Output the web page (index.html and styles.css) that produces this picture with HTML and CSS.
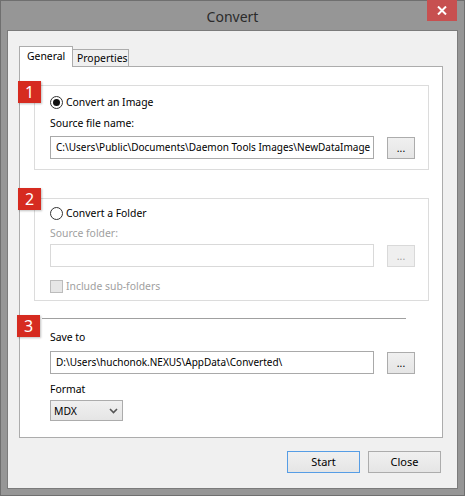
FILE: index.html
```html
<!DOCTYPE html>
<html>
<head>
<meta charset="utf-8">
<link rel="stylesheet" href="styles.css">
</head>
<body>
<div class="window">
  <div class="titlebar">
    <span class="title">Convert</span>
    <div class="close-btn"><svg width="10" height="9" viewBox="0 0 10 9"><path d="M1 0.5 L9 8.5 M9 0.5 L1 8.5" stroke="#fff" stroke-width="2"/></svg></div>
  </div>
  <div class="client">
    <div class="tabs">
      <div class="tab active">General</div>
      <div class="tab">Properties</div>
    </div>
    <div class="panel">
      <div class="group g1">
        <div class="badge">1</div>
        <div class="row"><span class="radio checked"></span><span>Convert an Image</span></div>
        <div class="row label">Source file name:</div>
        <div class="field-row">
          <div class="input">C:\Users\Public\Documents\Daemon Tools Images\NewDataImage</div>
          <div class="browse">...</div>
        </div>
      </div>
      <div class="group g2">
        <div class="badge">2</div>
        <div class="row"><span class="radio"></span><span>Convert a Folder</span></div>
        <div class="row label disabled">Source folder:</div>
        <div class="field-row">
          <div class="input disabled"></div>
          <div class="browse disabled">...</div>
        </div>
        <div class="row check-row disabled"><span class="checkbox"></span><span>Include sub-folders</span></div>
      </div>
      <div class="section3">
        <div class="badge">3</div>
        <div class="sep"></div>
        <div class="row label save-label">Save to</div>
        <div class="field-row save-row">
          <div class="input">D:\Users\huchonok.NEXUS\AppData\Converted\</div>
          <div class="browse">...</div>
        </div>
        <div class="row label format-label">Format</div>
        <div class="select"><span>MDX</span><svg width="9" height="6" viewBox="0 0 9 6"><path d="M1 1 L4.5 4.5 L8 1" fill="none" stroke="#555" stroke-width="1.6"/></svg></div>
      </div>
    </div>
    <div class="actions">
      <div class="btn primary">Start</div>
      <div class="btn">Close</div>
    </div>
  </div>
</div>
</body>
</html>
```
FILE: styles.css
```css
html, body {
  margin: 0;
  padding: 0;
}
body {
  font-family: "Noto Sans", "Open Sans", sans-serif;
  font-size: 10.4px;
  color: #000;
  background: #969696;
}
.window {
  width: 465px;
  height: 496px;
  box-sizing: border-box;
  background: #969696;
  border: 1px solid #6f6f6f;
  position: relative;
  display: flex;
  flex-direction: column;
  padding: 0 6px 6px 6px;
}
.titlebar {
  height: 29px;
  flex: none;
  display: flex;
  align-items: center;
  justify-content: center;
}
.title {
  font-size: 14px;
  color: #2b2b2b;
  margin-top: 1px;
}
.close-btn {
  position: absolute;
  top: -1px;
  right: 7px;
  width: 30px;
  height: 21px;
  background: #c75050;
  display: flex;
  align-items: center;
  justify-content: center;
}
.client {
  flex: 1;
  background: #f0f0f0;
  border: 1px solid #7b7b7b;
  display: flex;
  flex-direction: column;
  padding: 15px 14px 0 11px;
}
.tabs {
  display: flex;
  align-items: flex-end;
  flex: none;
}
.tab {
  box-sizing: border-box;
  height: 17px;
  border: 1px solid #acacac;
  border-bottom: none;
  background: #f0f0f0;
  padding: 0 4px;
  line-height: 16px;
  width: 57px;
  margin-left: -1px;
}
.tab.active {
  position: relative;
  z-index: 1;
  height: 21px;
  margin-bottom: -1px;
  margin-left: 0;
  width: 54px;
  background: #fff;
  padding: 0 7px;
  line-height: 19px;
}
.panel {
  box-sizing: border-box;
  width: 424px;
  height: 372px;
  flex: none;
  background: #fff;
  border: 1px solid #acacac;
  padding: 18px 13px 0 14px;
}
.group {
  position: relative;
  border: 1px solid #dcdcdc;
  padding: 8px 13px 10px 15px;
}
.g2 {
  margin-top: 28px;
  padding: 6px 13px 6px 15px;
}
.badge {
  position: absolute;
  left: -17px;
  top: -5px;
  width: 23px;
  height: 22px;
  background: #d62b20;
  color: #fff;
  font-size: 16px;
  line-height: 22px;
  text-align: center;
  box-shadow: 1px 1px 2px rgba(0, 0, 0, 0.25);
}
.g2 .badge {
  top: -11px;
}
.row {
  height: 16px;
  line-height: 16px;
  display: flex;
  align-items: center;
  white-space: nowrap;
}
.label {
  margin-top: 5px;
}
.g2 .label {
  margin-top: 4px;
}
.disabled {
  color: #a0a0a0;
}
.radio {
  box-sizing: border-box;
  width: 13px;
  height: 13px;
  border: 1px solid #333;
  border-radius: 50%;
  background: #fff;
  margin-right: 3px;
  display: flex;
  align-items: center;
  justify-content: center;
}
.radio.checked::after {
  content: "";
  width: 7px;
  height: 7px;
  border-radius: 50%;
  background: #111;
}
.checkbox {
  box-sizing: border-box;
  width: 13px;
  height: 13px;
  border: 1px solid #bcbcbc;
  background: #e6e6e6;
  margin-right: 3px;
}
.field-row {
  display: flex;
  align-items: flex-start;
  margin-top: 5px;
}
.g2 .field-row {
  margin-top: 3px;
}
.check-row {
  margin-top: 11px;
}
.input {
  box-sizing: border-box;
  width: 324px;
  height: 23px;
  border: 1px solid #a9a9a9;
  background: #fff;
  padding: 0 0 0 5px;
  line-height: 21px;
  font-size: 10px;
  white-space: nowrap;
  overflow: hidden;
}
.input.disabled {
  border-color: #d9d9d9;
}
.browse {
  box-sizing: border-box;
  width: 28px;
  height: 22px;
  margin-left: 13px;
  margin-top: 1px;
  border: 1px solid #acacac;
  background: linear-gradient(#f0f0f0, #e5e5e5);
  text-align: center;
  line-height: 21px;
}
.browse.disabled {
  border-color: #d9d9d9;
  background: #efefef;
  color: #a0a0a0;
}
.section3 {
  position: relative;
  margin-top: 17px;
  padding-left: 16px;
}
.section3 .badge {
  top: -3px;
}
.sep {
  height: 1px;
  width: 364px;
  margin-left: -8px;
  background: #a0a0a0;
}
.save-label {
  margin-top: 10px;
}
.save-row {
  margin-top: 6px;
}
.format-label {
  margin-top: 7px;
}
.select {
  box-sizing: border-box;
  margin-top: 3px;
  width: 73px;
  height: 21px;
  border: 1px solid #acacac;
  background: linear-gradient(#f0f0f0, #e5e5e5);
  display: flex;
  align-items: center;
  justify-content: space-between;
  padding: 0 4px 0 3px;
}
.actions {
  display: flex;
  justify-content: flex-end;
  gap: 8px;
  margin-top: 13px;
  margin-right: 2px;
}
.btn {
  box-sizing: border-box;
  width: 73px;
  height: 22px;
  border: 1px solid #acacac;
  background: linear-gradient(#f0f0f0, #e5e5e5);
  text-align: center;
  line-height: 20px;
  font-size: 11px;
}
.btn.primary {
  border-color: #569de5;
}
```
